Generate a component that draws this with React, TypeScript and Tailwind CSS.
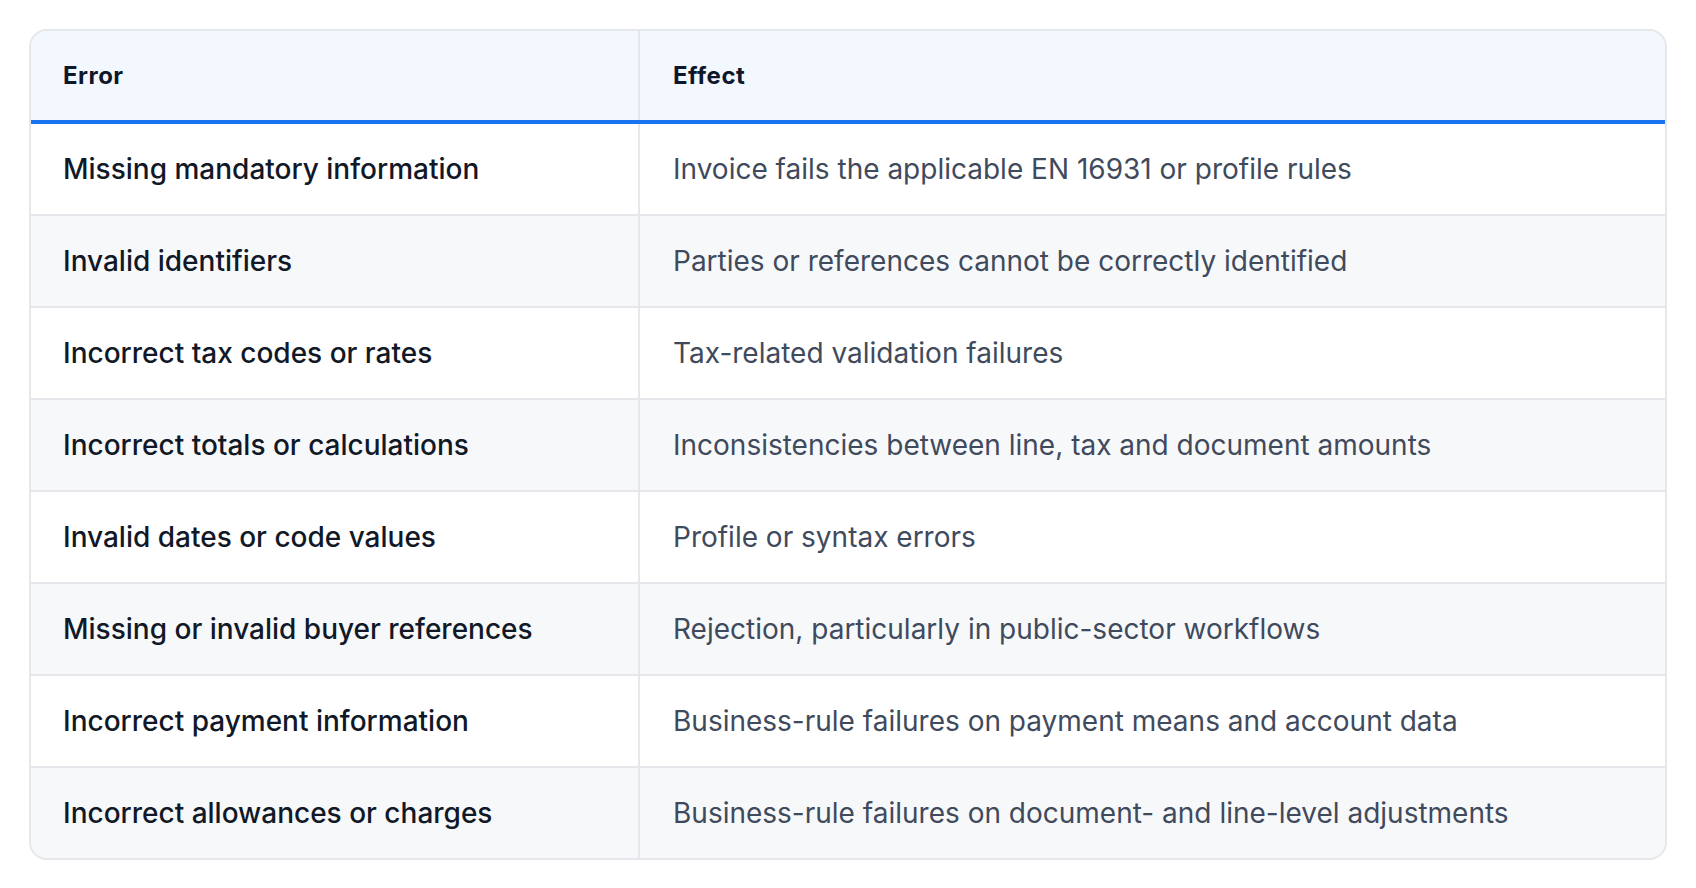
const rows = [
  ["Missing mandatory information", "Invoice fails the applicable EN 16931 or profile rules"],
  ["Invalid identifiers", "Parties or references cannot be correctly identified"],
  ["Incorrect tax codes or rates", "Tax-related validation failures"],
  ["Incorrect totals or calculations", "Inconsistencies between line, tax and document amounts"],
  ["Invalid dates or code values", "Profile or syntax errors"],
  ["Missing or invalid buyer references", "Rejection, particularly in public-sector workflows"],
  ["Incorrect payment information", "Business-rule failures on payment means and account data"],
  ["Incorrect allowances or charges", "Business-rule failures on document- and line-level adjustments"],
];

const App = () => {
  return (
    <div className="min-h-screen bg-white p-[29px] font-['Inter',sans-serif]">
      <div className="overflow-hidden rounded-[18px] border-2 border-[#e5e7eb]">
        <div className="grid grid-cols-[609px_1fr] border-b-4 border-[#1a73f0] bg-[#f3f7fe]">
          <div className="flex h-[89px] items-center border-r-2 border-[#e5e7eb] px-[32px] text-[24px] font-bold tracking-[0.02em] text-[#0f172a]">
            Error
          </div>
          <div className="flex h-[89px] items-center px-[33px] text-[24px] font-bold tracking-[0.02em] text-[#0f172a]">
            Effect
          </div>
        </div>
        {rows.map(([error, effect], i) => (
          <div
            key={error}
            className={`grid grid-cols-[609px_1fr] ${i % 2 === 1 ? "bg-[#f7f8fa]" : "bg-white"} ${
              i < rows.length - 1 ? "border-b-2 border-[#e5e7eb]" : ""
            }`}
          >
            <div className="flex h-[90px] items-center border-r-2 border-[#e5e7eb] px-[32px] text-[28px] font-medium text-[#111827]">
              {error}
            </div>
            <div className="flex h-[90px] items-center px-[33px] text-[28px] text-[#3f4a5c]">
              {effect}
            </div>
          </div>
        ))}
      </div>
    </div>
  );
};

export default App;
